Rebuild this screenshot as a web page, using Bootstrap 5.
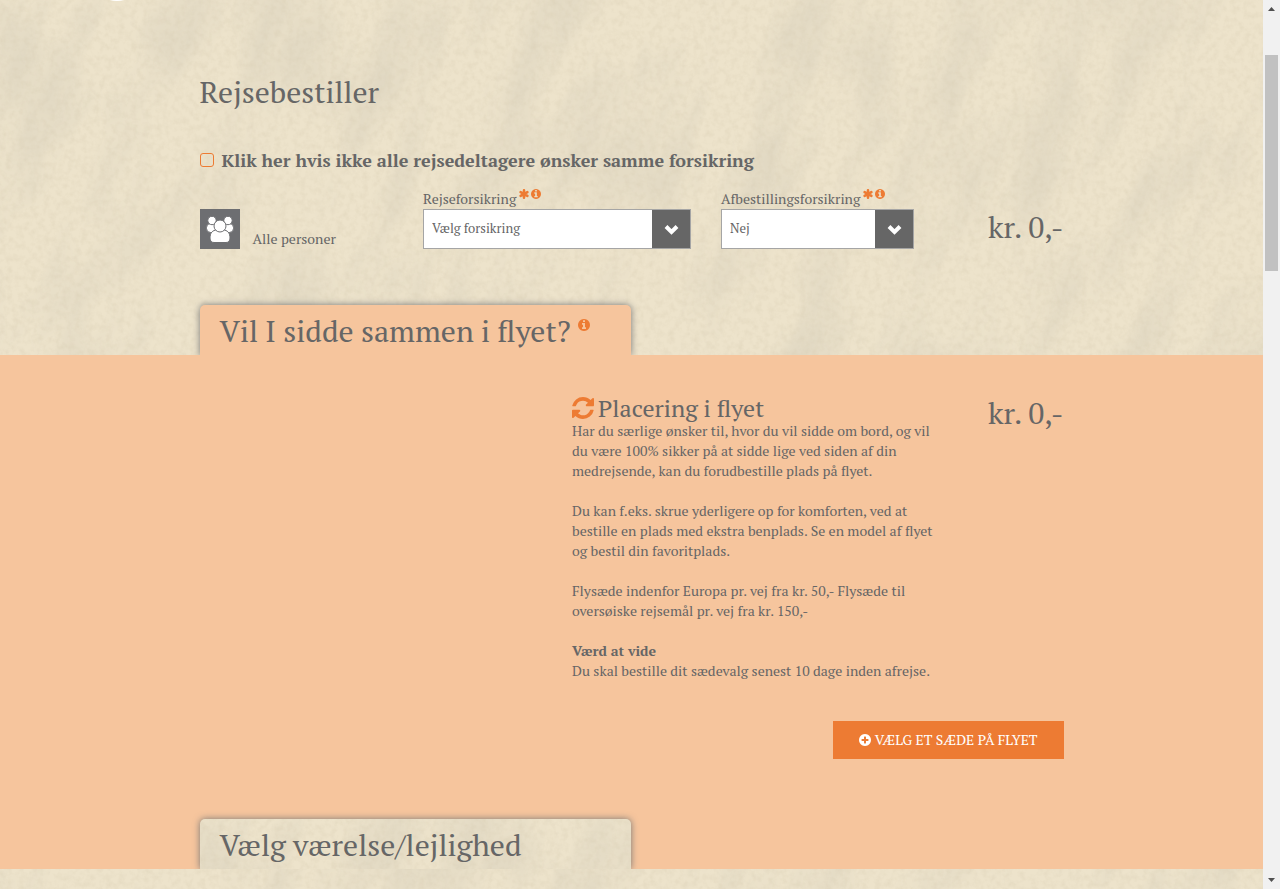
<!DOCTYPE html>
<html lang="da">
<head>
<meta charset="utf-8">
<meta name="viewport" content="width=device-width, initial-scale=1">
<title>Rejsebestiller</title>
<link href="https://cdn.jsdelivr.net/npm/bootstrap@5.3.0/dist/css/bootstrap.min.css" rel="stylesheet">
<style>
:root { --ink: #666; --orange: #ed7b33; --peach: #f6c59d; }
body { font-family: "PT Serif", "Liberation Serif", serif; font-size: 14px; line-height: 20px; color: var(--ink); background: #e9dfc7; }
.paper {
  background-color: #e9dfc7;
  background-image: url("data:image/svg+xml,%3Csvg xmlns='http://www.w3.org/2000/svg' width='1280' height='900'%3E%3Cfilter id='a' x='0' y='0' width='100%25' height='100%25'%3E%3CfeTurbulence type='fractalNoise' baseFrequency='.02 .007' numOctaves='4' seed='8'/%3E%3CfeColorMatrix values='0 0 0 0 .66 0 0 0 0 .61 0 0 0 0 .49 1.1 0 0 0 -.45'/%3E%3C/filter%3E%3Cfilter id='b' x='0' y='0' width='100%25' height='100%25'%3E%3CfeTurbulence type='fractalNoise' baseFrequency='.16' numOctaves='4' seed='3'/%3E%3CfeColorMatrix values='0 0 0 0 .66 0 0 0 0 .58 0 0 0 0 .42 .6 0 0 0 -.23'/%3E%3C/filter%3E%3Crect width='1280' height='900' fill='%23ede3cb'/%3E%3Crect x='-500' y='-700' width='2300' height='2300' transform='rotate(20)' filter='url(%23a)'/%3E%3Crect width='1280' height='900' filter='url(%23b)'/%3E%3C/svg%3E");
}
.peach { background-color: var(--peach); }
.page-col { max-width: 894px; padding-left: 15px; padding-right: 15px; }
.page-col .row { --bs-gutter-x: 30px; }
.title-main { font-size: 30px; line-height: 36px; }
.title-sub { font-size: 24px; line-height: 26px; }
.opener { padding-top: 74px; }
.split-row { margin: 38px 0 17px; font-size: 18px; line-height: 24px; }
.form-check-input.split-box { width: 14px; height: 14px; border: 1px solid var(--orange); border-radius: 3px; background-color: transparent; }
.group-tile { width: 40px; height: 40px; margin-right: 13px; background: #6d6e71; }
.form-select.pick {
  height: 40px; padding: 0 44px 0 8px; border: 1px solid #a5a5a5; border-radius: 0; color: var(--ink); font-size: 13px; background-color: #fff;
  background-image: url("data:image/svg+xml,%3Csvg xmlns='http://www.w3.org/2000/svg' viewBox='0 0 38 38'%3E%3Cpath fill='%23666' d='M0 0h38v38H0z'/%3E%3Cpath fill='none' stroke='%23fff' stroke-width='4' d='M14 16.500l5.500 5.500 5.500-5.500'/%3E%3C/svg%3E");
  background-position: right center; background-size: 38px 38px;
}
.marks { gap: 2px; margin-left: 3px; }
.tab-gap { margin-top: 46px; }
.tab-strip { overflow: hidden; padding-top: 10px; }
.tab-face { width: 100%; max-width: 431px; height: 50px; padding: 8px 20px 0; border-radius: 5px 5px 0 0; box-shadow: 0 0 7px #777; }
.tab-info { margin: 6px 0 0 7px; }
.tint { color: var(--orange); }
.glyph { fill: currentColor; display: inline-block; flex: none; }
.seat-copy { white-space: nowrap; }
.seat-action { padding: 16px 0 50px; }
.btn.seat-btn { background: var(--orange); color: #fff; border: 0; border-radius: 0; font-size: 14px; line-height: 20px; padding: 9px 26px; }
.scroll-rail { width: 17px; height: 100vh; top: 0; background: #f1f1f1; }
.scroll-thumb { width: 13px; height: 216px; margin-top: 42px; background: #c1c1c1; }
.cloud { top: -9px; left: 105px; width: 24px; height: 10px; background: #fff; border-radius: 50%; }
</style>
</head>
<body>
<svg class="d-none" aria-hidden="true">
  <symbol id="info" viewBox="0 128 1536 1536"><path d="M1024 1376v-160q0-14-9-23t-23-9h-96v-512q0-14-9-23t-23-9h-320q-14 0-23 9t-9 23v160q0 14 9 23t23 9h96v320h-96q-14 0-23 9t-9 23v160q0 14 9 23t23 9h448q14 0 23-9t9-23zm-128-896v-160q0-14-9-23t-23-9h-192q-14 0-23 9t-9 23v160q0 14 9 23t23 9h192q14 0 23-9t9-23zm640 416q0 209-103 385.5t-279.5 279.5-385.5 103-385.5-103-279.5-279.5-103-385.5 103-385.5 279.5-279.5 385.5-103 385.5 103 279.5 279.5 103 385.5z"/></symbol>
  <symbol id="plus" viewBox="0 128 1536 1536"><path d="M1216 960v-128q0-26-19-45t-45-19h-256v-256q0-26-19-45t-45-19h-128q-26 0-45 19t-19 45v256h-256q-26 0-45 19t-19 45v128q0 26 19 45t45 19h256v256q0 26 19 45t45 19h128q26 0 45-19t19-45v-256h256q26 0 45-19t19-45zm320-64q0 209-103 385.5t-279.5 279.5-385.5 103-385.5-103-279.5-279.5-103-385.5 103-385.5 279.5-279.5 385.5-103 385.5 103 279.5 279.5 103 385.5z"/></symbol>
  <symbol id="refresh" viewBox="0 128 1536 1536"><path d="M1511 1056q0 5-1 7-64 268-268 434.5t-478 166.5q-146 0-282.5-55t-243.5-157l-129 129q-19 19-45 19t-45-19-19-45v-448q0-26 19-45t45-19h448q26 0 45 19t19 45-19 45l-137 137q71 66 161 102t187 36q134 0 250-65t186-179q11-17 53-117 8-23 30-23h192q13 0 22.5 9.5t9.5 22.5zm25-800v448q0 26-19 45t-45 19h-448q-26 0-45-19t-19-45 19-45l138-138q-148-137-349-137-134 0-250 65t-186 179q-11 17-53 117-8 23-30 23h-199q-13 0-22.5-9.5t-9.5-22.5v-7q65-268 270-434.5t480-166.5q146 0 284 55.5t245 156.5l130-129q19-19 45-19t45 19 19 45z"/></symbol>
  <symbol id="star" viewBox="0 0 10 10"><path d="M5 1.200v7.600M1.600 3.100l6.800 3.800M8.400 3.100l-6.800 3.800" stroke="currentColor" stroke-width="2.500" stroke-linecap="round"/></symbol>
</svg>
<div class="d-flex min-vh-100">
  <main class="flex-grow-1 paper position-relative overflow-hidden">
    <span class="cloud position-absolute"></span>
    <section class="opener">
      <div class="container-fluid page-col">
        <h2 class="title-main fw-normal mb-0">Rejsebestiller</h2>
        <div class="d-flex align-items-center split-row">
          <input class="form-check-input split-box m-0" type="checkbox" id="split">
          <label class="fw-bold ms-2" for="split">Klik her hvis ikke alle rejsedeltagere ønsker samme forsikring</label>
        </div>
        <div class="row align-items-end">
          <div class="col-3 d-flex align-items-end">
            <div class="group-tile">
              <svg class="glyph" width="40" height="40" viewBox="0 0 40 40" stroke="#6d6e71" aria-hidden="true">
                <g fill="#fff" stroke-width="1"><rect x="6.500" y="14.500" width="12" height="9" rx="4"/><rect x="21.500" y="14.500" width="12" height="9" rx="4"/><circle cx="12" cy="11.500" r="4.200"/><circle cx="28" cy="11.500" r="4.200"/><path d="M10 29c0-5 2.500-8 7-8h6c4.500 0 7 3 7 8 0 3-1.500 4.500-4 4.500H14c-2.500 0-4-1.500-4-4.500z"/><circle cx="20" cy="17" r="6"/></g>
              </svg>
            </div>
            <span>Alle personer</span>
          </div>
          <div class="col-4">
            <div class="d-flex"><label for="travel">Rejseforsikring</label>
              <span class="tint d-flex marks"><svg class="glyph" width="10" height="10"><use href="#star"/></svg><a class="tint d-flex align-self-start" href="#" aria-label="Om rejseforsikring"><svg class="glyph" width="10" height="10"><use href="#info"/></svg></a></span></div>
            <select class="form-select pick" id="travel"><option>Vælg forsikring</option></select>
          </div>
          <div class="col-3">
            <div class="d-flex"><label for="cancel">Afbestillingsforsikring</label>
              <span class="tint d-flex marks"><svg class="glyph" width="10" height="10"><use href="#star"/></svg><a class="tint d-flex align-self-start" href="#" aria-label="Om afbestillingsforsikring"><svg class="glyph" width="10" height="10"><use href="#info"/></svg></a></span></div>
            <select class="form-select pick" id="cancel"><option>Nej</option></select>
          </div>
          <div class="col-2 text-end title-main text-nowrap pb-1">kr. 0,-</div>
        </div>
      </div>
      <div class="tab-strip tab-gap">
        <div class="container-fluid page-col">
          <div class="tab-face peach d-flex">
            <h2 class="title-main fw-normal mb-0">Vil I sidde sammen i flyet?</h2>
            <a class="tint tab-info d-flex align-self-start" href="#" aria-label="Om pladser i flyet"><svg class="glyph" width="12" height="12"><use href="#info"/></svg></a>
          </div>
        </div>
      </div>
    </section>
    <section class="peach">
      <div class="container-fluid page-col pt-4">
        <div class="row pt-3">
          <div class="col-5 offset-5 seat-copy">
            <h3 class="title-sub fw-normal d-flex align-items-center mb-0"><svg class="glyph tint me-1" width="22" height="22" aria-hidden="true"><use href="#refresh"/></svg>Placering i flyet</h3>
            <p class="mb-0">Har du særlige ønsker til, hvor du vil sidde om bord, og vil<br>du være 100% sikker på at sidde lige ved siden af din<br>medrejsende, kan du forudbestille plads på flyet.<br><br>Du kan f.eks. skrue yderligere op for komforten, ved at<br>bestille en plads med ekstra benplads. Se en model af flyet<br>og bestil din favoritplads.<br><br>Flysæde indenfor Europa pr. vej fra kr. 50,- Flysæde til<br>oversøiske rejsemål pr. vej fra kr. 150,-<br><br><b>Værd at vide</b><br>Du skal bestille dit sædevalg senest 10 dage inden afrejse.</p>
          </div>
          <div class="col-2 text-end title-main text-nowrap">kr. 0,-</div>
        </div>
        <div class="d-flex justify-content-end mt-4 seat-action">
          <button type="button" class="btn seat-btn d-flex align-items-center"><svg class="glyph me-1" width="12" height="12" aria-hidden="true"><use href="#plus"/></svg>VÆLG ET SÆDE PÅ FLYET</button>
        </div>
      </div>
      <div class="tab-strip">
        <div class="container-fluid page-col">
          <div class="tab-face paper"><h2 class="title-main fw-normal mb-0">Vælg værelse/lejlighed</h2></div>
        </div>
      </div>
    </section>
  </main>
  <div class="scroll-rail position-sticky flex-shrink-0 d-flex flex-column align-items-center py-1" aria-hidden="true">
    <svg width="9" height="9" viewBox="0 0 9 9"><path d="M1 7l3.500-4L8 7z" fill="#505050"/></svg>
    <div class="scroll-thumb"></div>
    <svg class="mt-auto" width="9" height="9" viewBox="0 0 9 9"><path d="M1 2l3.500 4L8 2z" fill="#505050"/></svg>
  </div>
</div>
<script src="https://cdn.jsdelivr.net/npm/bootstrap@5.3.0/dist/js/bootstrap.bundle.min.js"></script>
</body>
</html>
